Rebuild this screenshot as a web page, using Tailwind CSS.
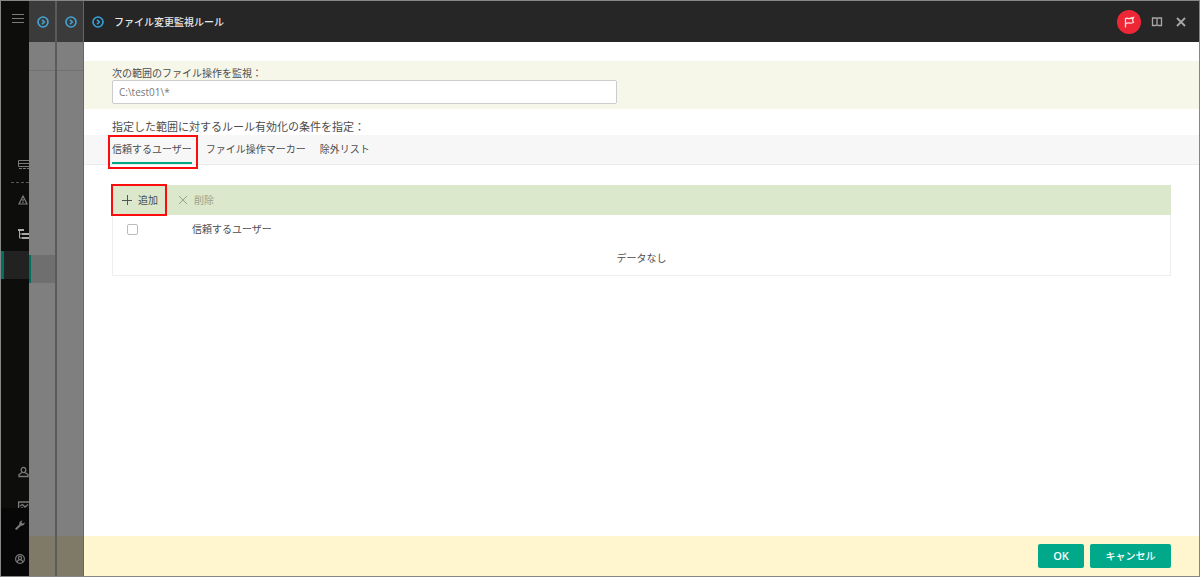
<!DOCTYPE html>
<html lang="ja">
<head>
    <meta charset="UTF-8">
    <meta name="viewport" content="width=device-width, initial-scale=1.0">
    <title>ファイル変更監視ルール</title>
    <script src="https://cdn.jsdelivr.net/npm/@tailwindcss/browser@4"></script>
</head>
<body class="flex h-screen bg-[#858786] p-px font-['Open_Sans','Noto_Sans_CJK_JP',sans-serif] text-[10px] leading-4 text-[#4c4c4c]">
    <!-- Main menu -->
    <aside class="flex w-7 shrink-0 flex-col overflow-hidden bg-[#0d0e0c] text-[#7a7a7a]">
        <button class="flex h-[34px] shrink-0 items-center pl-[11px]" aria-label="メニュー">
            <svg class="w-3 h-3 shrink-0" viewBox="0 0 12 12" fill="none" stroke="currentColor"><path d="M0 2.500h12M0 6.500h12M0 10.500h12"/></svg>
        </button>
        <nav class="mt-28 flex flex-1 flex-col">
            <a href="#" class="flex h-[34px] items-center pl-4" aria-label="サーバー">
                <svg class="w-3 h-3 shrink-0" viewBox="0 0 12 12" fill="none" stroke="currentColor"><path d="M1.500 2.500h11v6h-11zM1.500 5.500h11"/><path d="M2 10.500h10" stroke-dasharray="3 1"/></svg>
            </a>
            <div class="ml-2.5 border-t border-dashed border-[#555] mt-px"></div>
            <a href="#" class="flex h-[34px] items-center pl-4" aria-label="警告">
                <svg class="w-3 h-3 shrink-0" viewBox="0 0 12 12" fill="none" stroke="currentColor" stroke-width="1.200"><path d="M6 2L10 10H2zM6 5v2.500M6 8v1"/></svg>
            </a>
            <a href="#" class="flex h-[34px] items-center pl-4 text-[#aaa]" aria-label="管理対象">
                <svg class="w-3 h-3 shrink-0" viewBox="0 0 12 12" fill="none" stroke="currentColor"><path d="M1 2h6M5 6h7M5 10h7" stroke-width="2"/><path d="M2.500 2v8H5M2.500 6H5"/></svg>
            </a>
            <a href="#" class="h-7 border-l-3 border-[#04705f] bg-[#222]" aria-label="選択中のメニュー"></a>
            <a href="#" class="mt-auto flex h-[34px] items-center pl-4" aria-label="ユーザー">
                <svg class="w-3 h-3 shrink-0" viewBox="0 0 12 12" fill="none" stroke="currentColor" stroke-width="1.300"><ellipse cx="6.500" cy="4" rx="2.300" ry="2.700"/><path d="M5 6.500L2 8.500v2h9v-2L8 6.500"/></svg>
            </a>
            <a href="#" class="flex h-[19px] items-start overflow-hidden pl-4 pt-3" aria-label="レポート">
                <svg class="w-3 h-3 shrink-0" viewBox="0 0 12 12" fill="none" stroke="currentColor" stroke-width="1.300"><path d="M1.600 1h11v9h-11zM3 5l2.500-1.500L8 6l3-2.500M5 6v3"/></svg>
            </a>
        </nav>
        <div class="bg-[#070707]">
            <a href="#" class="flex h-[34px] items-center pl-3.5" aria-label="設定">
                <svg class="w-2.5 h-2.5 shrink-0" viewBox="0 0 10 10" fill="currentColor"><path d="M.4 8.200L4.300 4.600C3.900 2.600 5.200.5 7.600.5L6.500 2l.3 1.300 1.300.3L9.600 2.300c.3 2.400-1.500 3.800-3.700 3.500L1.900 9.700C1.200 10.200-.2 9 .4 8.200z"/></svg>
            </a>
            <a href="#" class="flex h-[34px] items-center pl-3.5" aria-label="アカウント">
                <svg class="w-2.5 h-2.5 shrink-0" viewBox="0 0 10 10" fill="none" stroke="currentColor" stroke-width="1.200"><circle cx="5" cy="5" r="4.400"/><circle cx="5" cy="4" r="1.600"/><path d="M2.200 8c.3-3 5.300-3 5.600 0"/></svg>
            </a>
        </div>
    </aside>

    <!-- Panels stacked under the current one -->
    <section class="flex w-7 shrink-0 flex-col border-r-2 border-[#5b5b5b] bg-[#7f7f7f]">
        <button class="flex h-[41px] shrink-0 items-center justify-center bg-[#3b3b3b] pl-0.5" aria-label="パネル 1">
            <svg class="w-3 h-3" viewBox="0 0 12 12" fill="none" stroke="#45a3d5" stroke-width="1.600"><circle cx="6" cy="6" r="5"/><path d="M5 3.700L7.300 6 5 8.300"/></svg>
        </button>
        <div class="h-[29px] border-b border-[#717171]"></div>
        <div class="mt-[184px] h-7 border-l-2 border-[#04705f] bg-[#6f6f6f]"></div>
        <div class="mt-auto h-10 bg-[#7f7a67]"></div>
    </section>
    <section class="flex w-[27px] shrink-0 flex-col border-r border-[#666] bg-[#7f7f7f]">
        <button class="flex h-[41px] shrink-0 items-center justify-center bg-[#3b3b3b] pl-0.5" aria-label="パネル 2">
            <svg class="w-3 h-3" viewBox="0 0 12 12" fill="none" stroke="#45a3d5" stroke-width="1.600"><circle cx="6" cy="6" r="5"/><path d="M5 3.700L7.300 6 5 8.300"/></svg>
        </button>
        <div class="h-[29px] border-b border-[#717171]"></div>
        <div class="mt-auto h-10 bg-[#7f7a67]"></div>
    </section>

    <!-- Current panel -->
    <main class="flex min-w-0 flex-1 flex-col bg-white">
        <header class="flex h-[41px] shrink-0 items-center bg-[#262626] pl-2 pr-3 text-[#a8a8a8]">
            <button aria-label="パネルを閉じる">
                <svg class="w-3 h-3" viewBox="0 0 12 12" fill="none" stroke="#35a4dd" stroke-width="1.600"><circle cx="6" cy="6" r="5"/><path d="M5 3.700L7.300 6 5 8.300"/></svg>
            </button>
            <h1 class="ml-2.5 font-medium text-[#e8e8e8]">ファイル変更監視ルール</h1>
            <div class="ml-auto flex items-center">
                <button class="flex size-6 items-center justify-center rounded-full bg-[#ee2737]" aria-label="通知">
                    <svg class="w-3 h-3" viewBox="0 0 12 12" fill="none" stroke="#ffd9dc" stroke-width="1.300"><path d="M2.500 11.500V2.500c1.500-.8 2.800.3 4 0L10.500 1.500 9.500 4l1 2.500c-2 .8-3 .8-4 .5-1.500-.3-2.500 0-4 1"/></svg>
                </button>
                <button class="ml-2.5" aria-label="ヘルプ">
                    <svg class="w-3 h-3" viewBox="0 0 12 12" fill="none" stroke="currentColor" stroke-width="1.300"><path d="M1.500 2H5l1 .6L7 2h3.500v7.500H7.500L6 8.800l-1.500.7h-3zM6 2.600v6.400"/></svg>
                </button>
                <button class="ml-3" aria-label="閉じる">
                    <svg class="w-3 h-3" viewBox="0 0 12 12" fill="none" stroke="currentColor" stroke-width="1.800"><path d="M2 2l8 8M10 2l-8 8"/></svg>
                </button>
            </div>
        </header>

        <div class="mt-[19px] bg-[#f6f6e9] px-7 pt-1 pb-[5px]">
            <label for="scope" class="block h-[15px]">次の範囲のファイル操作を監視：</label>
            <input id="scope" type="text" value="C:\test01\*" class="block h-6 w-[505px] max-w-full rounded-xs border border-[#ccc] bg-white px-1.5 text-[#777]">
        </div>

        <p class="mt-2.5 px-7 text-[11px]">指定した範囲に対するルール有効化の条件を指定：</p>
        <nav class="flex h-[30px] gap-3.5 border-b border-[#ebebeb] bg-[#f7f7f7] px-7">
            <a href="#" class="relative flex h-[29px] items-center border-b-2 border-[#01a982]" aria-current="page">
                信頼するユーザー
                <!-- highlight -->
                <span class="absolute -left-1 -right-1.5 top-0 h-[34px] border-2 border-[#fb0d0d]"></span>
            </a>
            <a href="#" class="flex h-[29px] items-center border-b-2 border-transparent">ファイル操作マーカー</a>
            <a href="#" class="flex h-[29px] items-center border-b-2 border-transparent">除外リスト</a>
        </nav>

        <div class="mx-7 mt-5 border border-t-0 border-[#eee]">
            <div class="-mx-px flex h-[30px] bg-[#dbe8cb]">
                <button class="relative flex items-center gap-1.5 pl-2.5 pr-2">
                    <svg class="w-2.5 h-2.5" viewBox="0 0 10 10" fill="none" stroke="#555"><path d="M5.500 0v10M0 5.500h10"/></svg>
                    追加
                    <!-- highlight -->
                    <span class="absolute -inset-px border-2 border-[#fb0d0d]"></span>
                </button>
                <button class="flex items-center gap-1.5 pl-3 text-[#9aa38e]" disabled>
                    <svg class="w-2.5 h-2.5" viewBox="0 0 10 10" fill="none" stroke="currentColor"><path d="M1 1l8 8M9 1l-8 8"/></svg>
                    削除
                </button>
            </div>
            <table class="w-full">
                <thead>
                    <tr class="h-[29px]">
                        <th class="w-[79px] pl-3.5 text-left">
                            <input type="checkbox" aria-label="すべて選択" class="block size-[11px] appearance-none rounded-xs border border-[#bbb] bg-white">
                        </th>
                        <th class="pb-0.5 text-left font-normal">信頼するユーザー</th>
                    </tr>
                </thead>
                <tbody>
                    <tr class="h-[31px]">
                        <td colspan="2" class="pb-1 text-center">データなし</td>
                    </tr>
                </tbody>
            </table>
        </div>

        <footer class="mt-auto flex h-10 shrink-0 items-center justify-end gap-1.5 bg-[#fff5cf] pr-7 font-medium text-white">
            <button class="h-6 w-[46px] rounded-xs bg-[#01a98a] text-[11px] font-semibold">OK</button>
            <button class="h-6 w-[81px] rounded-xs bg-[#01a98a]">キャンセル</button>
        </footer>
    </main>
</body>
</html>
